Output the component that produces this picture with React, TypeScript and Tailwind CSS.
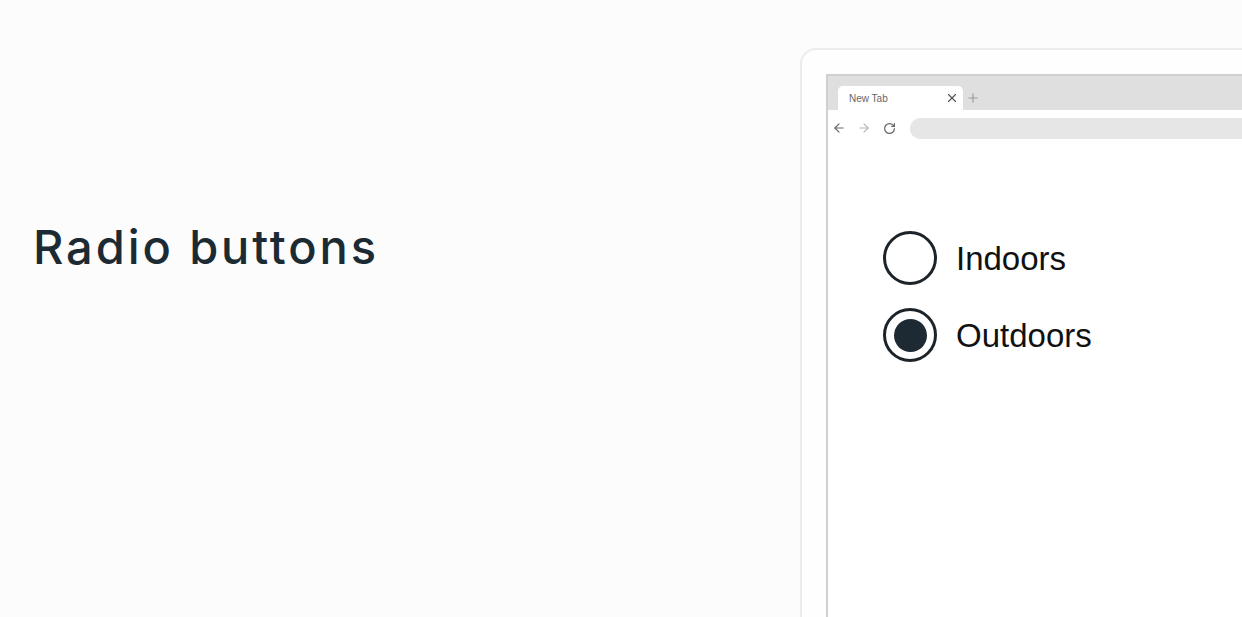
import { ArrowLeft, ArrowRight, RotateCw, X, Plus } from "lucide-react";

function RadioOption({ label, checked }: { label: string; checked?: boolean }) {
  return (
    <label className="flex items-center gap-[19px]">
      <span className="w-[54px] h-[54px] rounded-full border-[3px] border-[#1c2329] bg-white flex items-center justify-center">
        {checked && <span className="w-[33px] h-[33px] rounded-full bg-[#1e2a33]" />}
      </span>
      <span className="text-[33px] leading-none text-[#111] font-['Liberation_Sans',Arial,sans-serif]">
        {label}
      </span>
    </label>
  );
}

function BrowserChrome() {
  return (
    <div className="flex flex-col">
      <div className="h-[34px] bg-[#dfdfdf] flex items-end pl-[10px]">
        <div className="w-[125px] h-[24px] bg-white rounded-t-[5px] flex items-center justify-between pl-[11px] pr-[4px]">
          <span className="text-[10px] text-[#666] font-['Liberation_Sans',Arial,sans-serif]">New Tab</span>
          <X className="w-[14px] h-[14px] text-[#555]" strokeWidth={2} />
        </div>
        <div className="h-[24px] flex items-center pl-[3px]">
          <Plus className="w-[14px] h-[14px] text-[#999]" strokeWidth={2} />
        </div>
      </div>
      <div className="h-[36px] bg-white flex items-center pl-[4px]">
        <ArrowLeft className="w-[14px] h-[14px] text-[#666]" strokeWidth={2} />
        <ArrowRight className="w-[14px] h-[14px] text-[#b5b5b5] ml-[11px]" strokeWidth={2} />
        <RotateCw className="w-[13px] h-[13px] text-[#666] ml-[12px]" strokeWidth={2.25} />
        <div className="flex-1 h-[21px] bg-[#e6e6e6] rounded-l-[10px] ml-[14px]" />
      </div>
    </div>
  );
}

export default function App() {
  return (
    <div className="w-[1242px] h-[617px] overflow-hidden bg-[#fcfcfc] flex">
      <div className="w-[800px] shrink-0 pl-[33px] pt-[223px]">
        <h1 className="text-[47px] leading-none font-medium text-[#1c2b33] font-['Inter',sans-serif] tracking-[2.9px]">
          Radio buttons
        </h1>
      </div>
      <div className="flex-1 pt-[48px]">
        <div className="h-full border-l-2 border-t-2 border-[#ececec] rounded-tl-[16px] bg-[#fefefe] pl-[24px] pt-[24px]">
          <div className="h-full border-l-2 border-t-2 border-[#cfcfcf] bg-white">
            <BrowserChrome />
            <div className="flex flex-col gap-[23px] pl-[55px] pt-[85px]">
              <RadioOption label="Indoors" />
              <RadioOption label="Outdoors" checked />
            </div>
          </div>
        </div>
      </div>
    </div>
  );
}
